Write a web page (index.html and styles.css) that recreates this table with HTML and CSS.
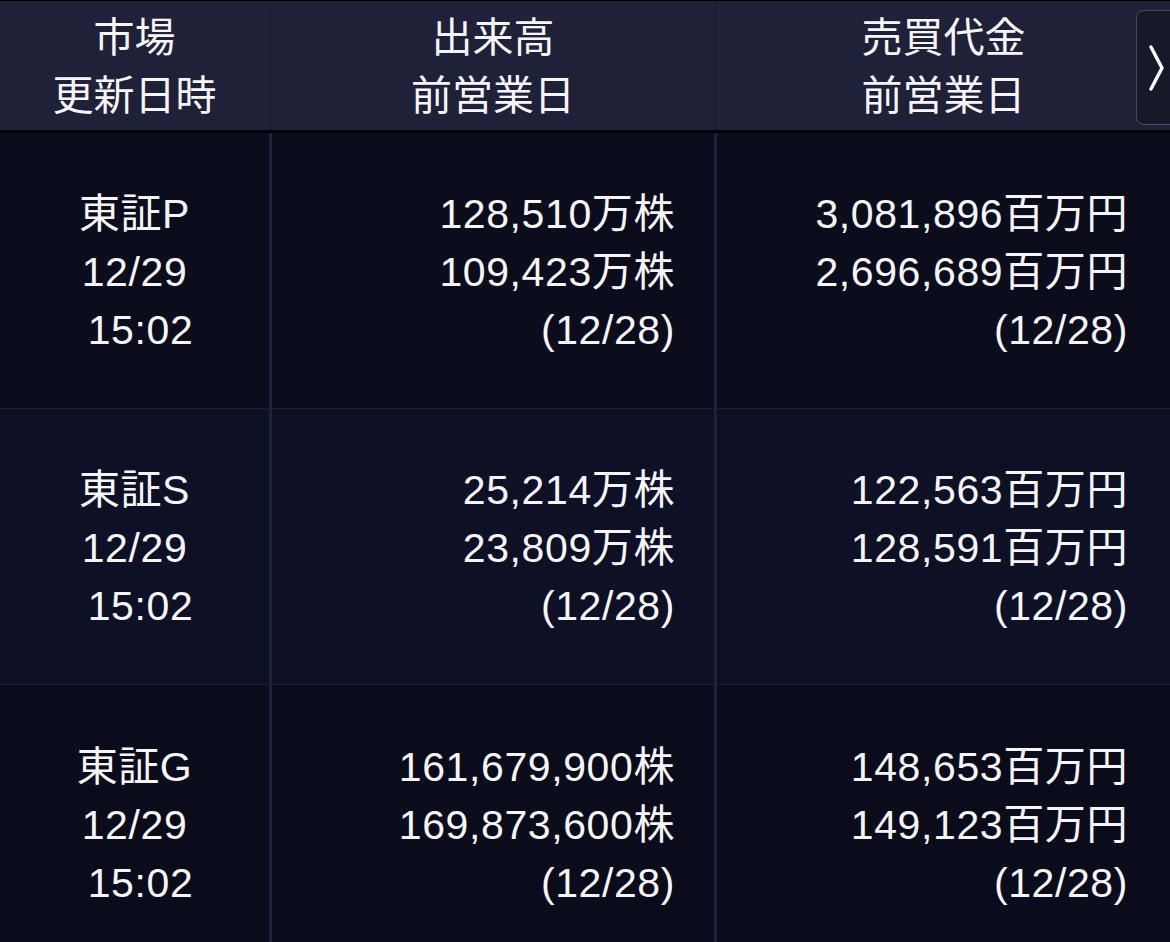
FILE: index.html
```html
<!DOCTYPE html>
<html lang="ja">
<head>
<meta charset="utf-8">
<title>市場 出来高 売買代金</title>
<link rel="stylesheet" href="styles.css">
</head>
<body>
<div class="table">
  <div class="head">
    <div class="hcell c1"><div>市場</div><div>更新日時</div></div>
    <div class="hcell c2"><div>出来高</div><div>前営業日</div></div>
    <div class="hcell c3"><div>売買代金</div><div>前営業日</div></div>
    <button class="next" aria-label="次へ">
      <svg width="20" height="46" viewBox="0 0 20 46"><polyline points="4,2 15,23 4,44" fill="none" stroke="#fff" stroke-width="3.4" stroke-linecap="round" stroke-linejoin="round"/></svg>
    </button>
  </div>
  <div class="row r1">
    <div class="cell c1"><div>東証P</div><div>12/29</div><div>&nbsp;15:02</div></div>
    <div class="cell c2 num"><div>128,510万株</div><div>109,423万株</div><div>(12/28)</div></div>
    <div class="cell c3 num"><div>3,081,896百万円</div><div>2,696,689百万円</div><div>(12/28)</div></div>
  </div>
  <div class="row r2">
    <div class="cell c1"><div>東証S</div><div>12/29</div><div>&nbsp;15:02</div></div>
    <div class="cell c2 num"><div>25,214万株</div><div>23,809万株</div><div>(12/28)</div></div>
    <div class="cell c3 num"><div>122,563百万円</div><div>128,591百万円</div><div>(12/28)</div></div>
  </div>
  <div class="row r3">
    <div class="cell c1"><div>東証G</div><div>12/29</div><div>&nbsp;15:02</div></div>
    <div class="cell c2 num"><div>161,679,900株</div><div>169,873,600株</div><div>(12/28)</div></div>
    <div class="cell c3 num"><div>148,653百万円</div><div>149,123百万円</div><div>(12/28)</div></div>
  </div>
</div>
</body>
</html>
```
FILE: styles.css
```css
html, body {
  margin: 0;
  padding: 0;
  background: #000;
  height: 942px;
  overflow: hidden;
}
body {
  font-family: "Liberation Sans", "Noto Sans CJK JP", sans-serif;
  font-size: 41px;
  line-height: 58px;
  color: #f6f6f8;
}
.table {
  padding-top: 1px;
}
.head {
  position: relative;
  display: grid;
  grid-template-columns: 269px 445px 1fr;
  height: 129px;
  background: #1f2139;
  border-bottom: 3px solid #000;
}
.hcell {
  display: flex;
  flex-direction: column;
  justify-content: center;
  align-items: center;
  padding-top: 2px;
}
.head .c2, .head .c3 {
  border-left: 3px solid #1b1e35;
}
.next {
  position: absolute;
  left: 1136px;
  top: 9px;
  width: 50px;
  height: 115px;
  padding: 0 0 0 10px;
  background: #171928;
  border: 1.5px solid #474b5e;
  border-radius: 8px;
  display: flex;
  align-items: center;
  justify-content: flex-start;
}
.row {
  display: grid;
  grid-template-columns: 269px 445px 1fr;
  height: 275px;
  border-bottom: 1px solid #1c1f3b;
}
.r1 { background: #0b0d1c; }
.r2 { background: #0e1026; }
.r3 { background: #0a0c1b; height: 280px; }
.cell {
  display: flex;
  flex-direction: column;
  justify-content: center;
  padding-top: 3px;
  letter-spacing: 0.6px;
}
.cell.c1 {
  align-items: center;
}
.row .c2, .row .c3 {
  border-left: 3px solid #1e2140;
}
.num {
  align-items: flex-end;
}
.c2.num { padding-right: 39px; }
.c3.num { padding-right: 42px; }
.r3 .cell { padding-top: 0; padding-bottom: 0; justify-content: flex-start; }
.r3 .cell > div:first-child { margin-top: 53px; }
```
